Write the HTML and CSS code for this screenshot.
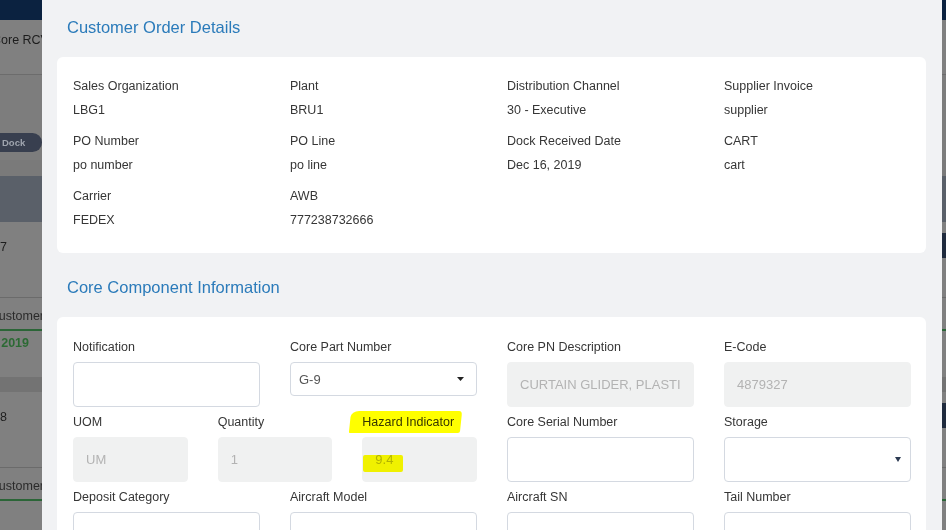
FILE: index.html
```html
<!DOCTYPE html>
<html lang="en">
<head>
<meta charset="utf-8">
<title>Customer Order Details</title>
<link rel="stylesheet" href="styles.css">
</head>
<body>
<div class="app">
  <div class="app-header"></div>
  <div class="app-toolbar"><span class="crumb">Core RCV</span></div>
  <div class="app-filters"><span class="pill">Dock</span></div>
  <div class="app-gap"></div>
  <div class="app-thead"></div>
  <div class="app-row">
    <div class="row-top"><div class="cut"><span>100047</span></div><span class="row-btn"></span></div>
    <div class="row-bottom">
      <div class="cut"><span>Customer</span></div>
      <div class="green-line"></div>
      <div class="cut date"><span>Dec 16, 2019</span></div>
    </div>
  </div>
  <div class="app-band"></div>
  <div class="app-row second">
    <div class="row-top"><div class="cut"><span>100048</span></div><span class="row-btn"></span></div>
    <div class="row-bottom">
      <div class="cut"><span>Customer</span></div>
      <div class="green-line"></div>
    </div>
  </div>
</div>

<div class="modal">
  <h2 class="section-title">Customer Order Details</h2>
  <div class="card info-card">
    <div class="grid4 info-grid">
      <div class="info"><div class="lbl">Sales Organization</div><div class="val">LBG1</div></div>
      <div class="info"><div class="lbl">Plant</div><div class="val">BRU1</div></div>
      <div class="info"><div class="lbl">Distribution Channel</div><div class="val">30 - Executive</div></div>
      <div class="info"><div class="lbl">Supplier Invoice</div><div class="val">supplier</div></div>
      <div class="info"><div class="lbl">PO Number</div><div class="val">po number</div></div>
      <div class="info"><div class="lbl">PO Line</div><div class="val">po line</div></div>
      <div class="info"><div class="lbl">Dock Received Date</div><div class="val">Dec 16, 2019</div></div>
      <div class="info"><div class="lbl">CART</div><div class="val">cart</div></div>
      <div class="info"><div class="lbl">Carrier</div><div class="val">FEDEX</div></div>
      <div class="info"><div class="lbl">AWB</div><div class="val">777238732666</div></div>
    </div>
  </div>

  <h2 class="section-title">Core Component Information</h2>
  <div class="card form-card">
    <div class="grid4 form-grid">
      <div class="field"><label class="flabel">Notification</label><div class="input"></div></div>
      <div class="field"><label class="flabel">Core Part Number</label>
        <div class="input select short"><span>G-9</span>
          <svg class="caret" width="7" height="4" viewBox="0 0 7 4"><path d="M0 0 L7 0 L3.5 4 Z" fill="#222"/></svg>
        </div>
      </div>
      <div class="field"><label class="flabel">Core PN Description</label><div class="input disabled">CURTAIN GLIDER, PLASTI</div></div>
      <div class="field"><label class="flabel">E-Code</label><div class="input disabled">4879327</div></div>

      <div class="sub3">
        <div class="field"><label class="flabel">UOM</label><div class="input disabled">UM</div></div>
        <div class="field"><label class="flabel">Quantity</label><div class="input disabled">1</div></div>
        <div class="field"><label class="flabel"><span class="mark mark-label">Hazard Indicator</span></label><div class="input disabled"><span class="mark mark-value">9.4</span></div></div>
      </div>
      <div class="field"><label class="flabel">Core Serial Number</label><div class="input"></div></div>
      <div class="field"><label class="flabel">Storage</label>
        <div class="input select">
          <svg class="caret caret-storage" width="6" height="5" viewBox="0 0 6 5"><path d="M0 0 L6 0 L3 5 Z" fill="#2c3a52"/></svg>
        </div>
      </div>

      <div class="field"><label class="flabel">Deposit Category</label><div class="input"></div></div>
      <div class="field"><label class="flabel">Aircraft Model</label><div class="input"></div></div>
      <div class="field"><label class="flabel">Aircraft SN</label><div class="input"></div></div>
      <div class="field"><label class="flabel">Tail Number</label><div class="input"></div></div>
    </div>
  </div>
</div>
</body>
</html>
```
FILE: styles.css
```css
* { box-sizing: border-box; }
html, body { margin: 0; padding: 0; }
body {
  width: 946px;
  height: 530px;
  overflow: hidden;
  position: relative;
  background: #808080;
  font-family: "Liberation Sans", Arial, sans-serif;
  color: #222;
}

/* dimmed background application */
.app-header { height: 20px; background: #0b2240; }
.app-toolbar {
  height: 55px;
  border-bottom: 1px solid #6c6c6c;
  padding-top: 12px;
  font-size: 12.5px;
  line-height: 16px;
  color: #1c1c1c;
}
.crumb { margin-left: -8px; }
.app-filters {
  height: 85px;
  padding-top: 57px;
  background: #7d7d7d;
}
.pill {
  display: inline-block;
  margin-left: -12px;
  width: 54px;
  height: 19px;
  border-radius: 10px;
  background: #383f4f;
  color: #9ea4ae;
  font-size: 9.5px;
  font-weight: bold;
  line-height: 19px;
  padding-left: 14px;
}
.app-gap { height: 16px; background: #7a7a7a; }
.app-thead { height: 46px; background: #5a6069; }
.app-row { height: 155px; }
.app-row.second { height: 160px; }
.row-top {
  height: 76px;
  border-bottom: 1px solid #6b6b6b;
  padding-top: 17px;
  display: flex;
  justify-content: space-between;
  align-items: flex-start;
  font-size: 12.5px;
  line-height: 16px;
  color: #1e1e1e;
}
.row-btn {
  width: 40px;
  height: 25px;
  margin-top: -6px;
  margin-right: -30px;
  background: #1f2a3d;
}
.row-bottom {
  padding-top: 10px;
  font-size: 12.5px;
  line-height: 16px;
  color: #2a2a2a;
}
.cut {
  display: flex;
  justify-content: flex-end;
  white-space: nowrap;
}
.row-top .cut { width: 7px; }
.row-bottom .cut { width: 44px; }
.row-bottom .cut.date { width: 29px; font-weight: bold; color: #2c6a34; }
.green-line { height: 2px; background: #2b6537; margin: 5px 0 4px; }
.app-band { height: 15px; background: #737373; }

/* modal */
.modal {
  position: absolute;
  top: 0;
  left: 42px;
  width: 900px;
  height: 530px;
  overflow: hidden;
  background: #f1f2f4;
  padding: 0 16px 0 15px;
}
.section-title {
  margin: 0;
  height: 57px;
  padding: 17px 0 0 10px;
  font-size: 16.5px;
  line-height: 20px;
  font-weight: normal;
  color: #2b7bba;
}
.card { background: #fff; border-radius: 6px; }
.info-card { padding: 20px 15px 24px 16px; margin-bottom: 7px; }
.grid4 {
  display: grid;
  grid-template-columns: repeat(4, 187px);
  column-gap: 30px;
}
.info-grid { row-gap: 13px; }
.lbl, .val { font-size: 12.5px; line-height: 18px; color: #363636; white-space: nowrap; }
.val { margin-top: 6px; }

.form-card { padding: 21px 15px 30px 16px; }
.form-grid { row-gap: 6px; }
.sub3 {
  grid-column: span 2;
  display: grid;
  grid-template-columns: repeat(3, 1fr);
  column-gap: 30px;
}
.flabel {
  display: block;
  font-size: 12.5px;
  line-height: 18px;
  color: #363636;
  margin-bottom: 6px;
  white-space: nowrap;
}
.input {
  height: 45px;
  border: 1px solid #d4d9e1;
  border-radius: 4px;
  background: #fff;
  font-size: 13px;
  line-height: 43px;
  padding: 0 12px;
  color: #555;
  white-space: nowrap;
  overflow: hidden;
}
.input.disabled {
  background: #f0f1f1;
  border-color: #f0f1f1;
  color: #b3b3b3;
}
.select {
  display: flex;
  align-items: center;
  justify-content: space-between;
  padding: 0 12px 0 8px;
}
.select.short { height: 34px; }
.caret { display: block; flex: none; margin-left: auto; }
.caret-storage { margin-right: -3px; }

/* yellow marker highlights */
.mark { position: relative; display: inline-block; }
.mark::before {
  content: "";
  position: absolute;
  background: #ffff00;
  mix-blend-mode: multiply;
}
.mark-label::before {
  left: -12px;
  right: -7px;
  top: -2px;
  bottom: -2px;
  border-radius: 8px 3px 2px 1px / 6px 4px 2px 1px;
  transform: skewX(-6deg);
}
.mark-value { line-height: 18px; }
.mark-value::before {
  left: -12px;
  right: -10px;
  top: 4px;
  bottom: -3px;
  border-radius: 2px;
}
```
